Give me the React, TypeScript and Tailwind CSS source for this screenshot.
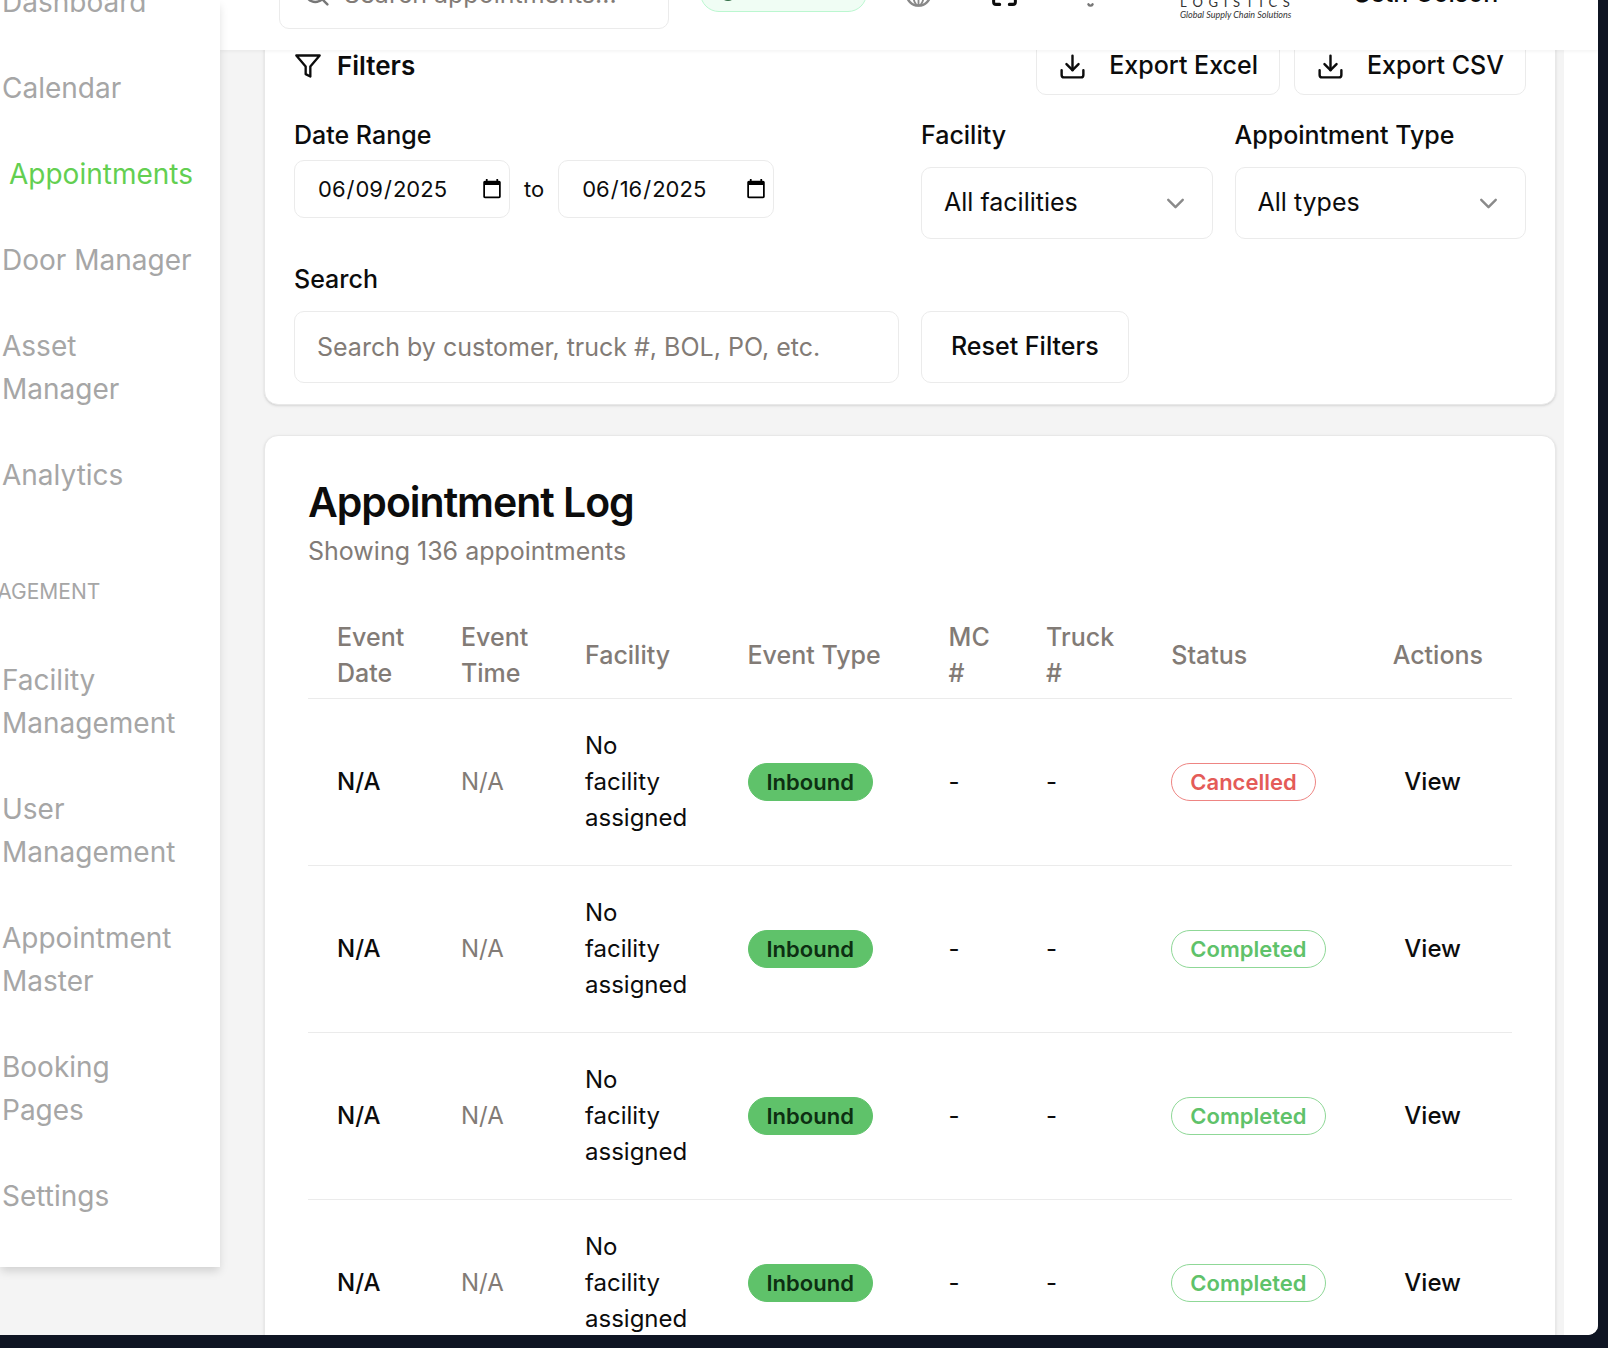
import React from "react";
import { ChevronDown, Download, Maximize, Search } from "lucide-react";

const mainLinks = ["Dashboard", "Calendar", "Appointments", "Door Manager", "Asset Manager", "Analytics"];
const managementLinks = ["Facility Management", "User Management", "Appointment Master", "Booking Pages", "Settings"];

const appointments = [
  { id: 1, status: "Cancelled" },
  { id: 2, status: "Completed" },
  { id: 3, status: "Completed" },
  { id: 4, status: "Completed" },
];

const outline = "rounded-[10px] border border-[#ebebeb] bg-white";

function NavLink({ label }: { label: string }) {
  const active = label === "Appointments";
  return (
    <a
      href="#"
      className={
        active
          ? "block pt-[21px] pb-[22px] pl-[9px] text-[28px] leading-[43px] text-[#63cf51]"
          : "block pt-[21px] pb-[22px] pl-[2px] pr-[24px] text-[28px] leading-[43px] text-[#a6a6a6]"
      }
    >
      {label}
    </a>
  );
}

function Sidebar() {
  return (
    <aside className="relative z-20 h-[1267px] w-[220px] shrink-0 bg-white shadow-[0_5px_9px_-1px_rgba(0,0,0,0.15)]">
      <nav className="-mt-[40px]">
        {mainLinks.map((l) => (
          <NavLink key={l} label={l} />
        ))}
        <h2 className="-ml-[52px] mt-[51px] mb-[25px] text-[21px] leading-[43px] text-[#a6a6a6]">MANAGEMENT</h2>
        {managementLinks.map((l) => (
          <NavLink key={l} label={l} />
        ))}
      </nav>
    </aside>
  );
}

function GlobeIcon() {
  return (
    <svg viewBox="0 0 24 24" className="size-[29px]" fill="none" stroke="currentColor" strokeWidth="2">
      <circle cx="12" cy="12" r="10" />
      <ellipse cx="12" cy="12" rx="4.5" ry="10" strokeWidth="1.5" />
      <path d="M12 2v20M2 12h20" strokeWidth="1.5" />
    </svg>
  );
}

function BellIcon() {
  return (
    <svg viewBox="0 0 24 24" className="size-[29px]" fill="none" stroke="currentColor" strokeWidth="2" strokeLinecap="round" strokeLinejoin="round">
      <path d="M6 7a6 6 0 0 1 12 0c0 6 3 8 3 8H3s3-2 3-8" />
      <path d="M10.3 21a1.94 1.94 0 0 0 3.4 0" />
    </svg>
  );
}

function Header() {
  return (
    <header className="relative z-10 h-[50px] overflow-hidden bg-white shadow-[0_1px_4px_rgba(0,0,0,0.06)]">
      <div className="-mt-[43px] flex h-[72px] items-center pl-[59px]">
        <label className={"flex h-full w-[390px] items-center gap-[13px] pl-[22px] " + outline}>
          <Search size={29} className="shrink-0 text-[#777]" />
          <input
            type="text"
            aria-label="Search appointments"
            placeholder="Search appointments..."
            className="h-full w-full pt-[2px] text-[25px] outline-none placeholder:text-[#827b76]"
          />
        </label>
        <div role="status" aria-label="Connected" className="ml-[31px] flex h-[38px] w-[167px] items-center rounded-full border border-[#bbf7d0] bg-[#f0fdf4] pl-[19px]">
          <span className="size-4 rounded-full bg-[#2f6b42]" />
        </div>
        <div className="ml-[15px] flex gap-[14px]">
          <button aria-label="Language" className="flex h-[72px] w-[72px] items-center justify-center text-[#888]">
            <GlobeIcon />
          </button>
          <button aria-label="Full screen" className="flex h-[72px] w-[72px] items-center justify-center">
            <Maximize size={29} strokeWidth={2.5} />
          </button>
          <button aria-label="Notifications" className="flex h-[72px] w-[72px] items-center justify-center text-[#777]">
            <BellIcon />
          </button>
        </div>
        <div className="mb-[8px] ml-[54px] w-[112px] shrink-0 self-end text-[#333]">
          <div className="flex justify-between pr-[2px] font-['Lato',sans-serif] text-[13px] leading-[14px]">
            {"LOGISTICS".split("").map((c, i) => (
              <span key={i}>{c}</span>
            ))}
          </div>
          <div className="whitespace-nowrap font-['Lato',sans-serif] text-[9px] italic leading-[12px]">
            Global Supply Chain Solutions
          </div>
        </div>
        <div className="ml-[62px] whitespace-nowrap text-[25px] font-medium leading-9">Seth Colson</div>
      </div>
    </header>
  );
}

function FilterIcon() {
  return (
    <svg viewBox="0 0 24 24" className="size-[28px]" fill="none" stroke="currentColor" strokeWidth="2" strokeLinecap="round" strokeLinejoin="round">
      <polygon points="22 3 2 3 10 12.46 10 19 14 21 14 12.46 22 3" />
    </svg>
  );
}

function DateInput({ label, value }: { label: string; value: string }) {
  return (
    <input
      type="date"
      aria-label={label}
      defaultValue={value}
      className={"h-[58px] w-[216px] pl-[22px] pr-[4px] text-[22px] " + outline}
    />
  );
}

function SelectField({ id, label, value }: { id: string; label: string; value: string }) {
  return (
    <div>
      <label htmlFor={id} className="mb-[14px] block text-[25px] font-medium leading-9">
        {label}
      </label>
      <div className="relative">
        <select id={id} className={"h-[72px] w-full appearance-none px-[22px] text-[25px] " + outline}>
          <option>{value}</option>
        </select>
        <ChevronDown size={29} className="pointer-events-none absolute right-[23px] top-[22px] text-[#8a8a8a]" />
      </div>
    </div>
  );
}

function Filters() {
  return (
    <section className="-mt-[33px] rounded-[14px] border border-[#e8e8e8] bg-white px-[29px] pb-[21px] pt-[19px] shadow-sm">
      <div className="flex items-center justify-between">
        <h2 className="flex items-center gap-[15px] text-[26px] font-semibold leading-9">
          <FilterIcon />
          Filters
        </h2>
        <div className="flex gap-[14px]">
          {["Export Excel", "Export CSV"].map((t) => (
            <button key={t} className={"flex h-[58px] items-center gap-[22px] px-[21px] text-[25px] font-medium " + outline}>
              <Download size={29} />
              {t}
            </button>
          ))}
        </div>
      </div>
      <div className="mt-[22px] grid grid-cols-4 gap-[22px]">
        <fieldset className="col-span-2">
          <legend className="mb-[7px] text-[25px] font-medium leading-9">Date Range</legend>
          <div className="flex items-center gap-[14px]">
            <DateInput label="Start date" value="2025-06-09" />
            <span className="text-[22px]">to</span>
            <DateInput label="End date" value="2025-06-16" />
          </div>
        </fieldset>
        <SelectField id="facility" label="Facility" value="All facilities" />
        <SelectField id="type" label="Appointment Type" value="All types" />
        <div className="col-span-2">
          <label htmlFor="search" className="mb-[14px] block text-[25px] font-medium leading-9">
            Search
          </label>
          <input
            id="search"
            type="text"
            placeholder="Search by customer, truck #, BOL, PO, etc."
            className={"h-[72px] w-full px-[22px] text-[25px] placeholder:text-[#827b76] " + outline}
          />
        </div>
        <div className="flex items-end">
          <button className={"h-[72px] px-[29px] text-[25px] font-medium " + outline}>Reset Filters</button>
        </div>
      </div>
    </section>
  );
}

const columns = [
  { label: "Event Date", width: "w-[10.3%]" },
  { label: "Event Time", width: "w-[10.3%]" },
  { label: "Facility", width: "w-[13.5%]" },
  { label: "Event Type", width: "w-[16.7%]" },
  { label: "MC #", width: "w-[8.1%]" },
  { label: "Truck #", width: "w-[10.4%]" },
  { label: "Status", width: "w-[18.5%]" },
  { label: "Actions", width: "w-[12.2%]" },
];

const badge = "inline-flex h-[38px] items-center rounded-full border px-[18px] text-[22px] font-semibold leading-7";

function AppointmentLog() {
  return (
    <section className="mt-[30px] rounded-[14px] border border-[#e8e8e8] bg-white px-[43px] pt-[43px] shadow-sm">
      <h1 className="text-[41px] font-semibold leading-[46px] tracking-tight">Appointment Log</h1>
      <p className="mt-[8px] text-[25px] leading-9 text-[#827b76]">Showing 136 appointments</p>
      <table className="mt-[43px] w-full table-fixed text-left leading-9">
        <thead>
          <tr className="h-[86px] border-b border-[#ebebeb] text-[25px] text-[#827b76]">
            {columns.map((c) => (
              <th
                key={c.label}
                className={"font-medium leading-9 last:pr-[29px] last:text-right not-last:pl-[29px] not-last:pr-[20px] " + c.width}
              >
                {c.label}
              </th>
            ))}
          </tr>
        </thead>
        <tbody className="text-[24px]">
          {appointments.map((a) => (
            <tr key={a.id} className="h-[167px] border-b border-[#ebebeb]">
              <td className="px-[29px] font-medium leading-9">N/A</td>
              <td className="px-[29px] leading-9 text-[#827b76]">N/A</td>
              <td className="px-[29px] leading-9">No facility assigned</td>
              <td className="px-[29px]">
                <span className={badge + " border-[#5fc26a] bg-[#5fc26a] text-[#0d2f12]"}>Inbound</span>
              </td>
              <td className="px-[29px]">-</td>
              <td className="px-[29px]">-</td>
              <td className="px-[29px]">
                <span
                  className={
                    badge + (a.status === "Cancelled" ? " border-[#ee8583] text-[#e45b58]" : " border-[#8fd897] text-[#5fc26a]")
                  }
                >
                  {a.status}
                </span>
              </td>
              <td className="pr-[29px] text-right">
                <button className="px-[22px] font-medium">View</button>
              </td>
            </tr>
          ))}
        </tbody>
      </table>
    </section>
  );
}

export default function App() {
  return (
    <div className="h-screen overflow-hidden bg-[#0f1523] pb-[13px] pr-[10px] font-['Inter',sans-serif] text-[#0c0c0c]">
      <div className="flex h-full overflow-hidden rounded-br-[10px] bg-[#f4f4f4]">
        <Sidebar />
        <div className="flex min-w-0 flex-1 flex-col">
          <Header />
          <div className="flex min-h-0 flex-1 bg-white pr-[34px]">
            <main className="min-w-0 flex-1 overflow-hidden bg-[#f4f4f4] pl-[44px] pr-[8px]">
              <Filters />
              <AppointmentLog />
            </main>
          </div>
        </div>
      </div>
    </div>
  );
}
